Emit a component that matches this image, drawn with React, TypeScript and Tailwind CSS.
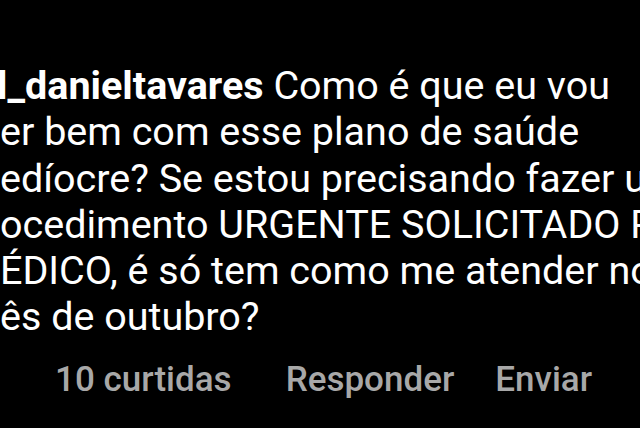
const lines: { hidden: string; shown: React.ReactNode }[] = [
  {
    hidden: "",
    shown: (
      <>
        <span className="font-bold">l_danieltavares</span> Como é que eu vou
      </>
    ),
  },
  { hidden: "viv", shown: "er bem com esse plano de saúde" },
  { hidden: "m", shown: "edíocre? Se estou precisando fazer um" },
  { hidden: "pr", shown: "ocedimento URGENTE SOLICITADO PELO" },
  { hidden: "M", shown: "ÉDICO, é só tem como me atender no" },
  { hidden: "m", shown: "ês de outubro?" },
];

export default function App() {
  return (
    <div
      className="w-[640px] h-[428px] overflow-hidden bg-black text-white"
      style={{ fontFamily: "Roboto, 'Noto Sans', sans-serif" }}
    >
      {/* comment body, cropped on both sides */}
      <div className="pt-[63px] text-[39.5px] leading-[46.3px] whitespace-nowrap">
        {lines.map((line, i) => (
          <div key={i} className={i === 0 ? "flex -ml-[3px]" : "flex"}>
            <span className="inline-flex w-0 justify-end">{line.hidden}</span>
            <span>{line.shown}</span>
          </div>
        ))}
      </div>

      {/* actions row */}
      <div className="mt-[19px] flex pl-[55px] text-[35px] leading-[40px] font-medium text-[#a8a8a8] whitespace-nowrap">
        <span>10 curtidas</span>
        <span className="ml-[54px]">Responder</span>
        <span className="ml-[41px]">Enviar</span>
      </div>
    </div>
  );
}
